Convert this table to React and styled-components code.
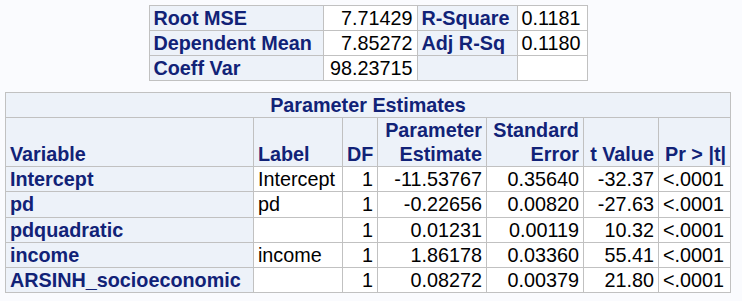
import styled, { createGlobalStyle } from "styled-components";

const GlobalStyle = createGlobalStyle`
  html, body {
    margin: 0;
    padding: 0;
    background: #fafbfe;
  }
`;

const Page = styled.div`
  display: flex;
  flex-direction: column;
  align-items: center;
  gap: 11px;
  padding: 5px 6px 0 0;
  font-family: "Liberation Sans", Arial, sans-serif;
  font-size: 19.8px;
`;

const Table = styled.table`
  border-collapse: collapse;
  table-layout: fixed;
  width: ${(p) => p.$width}px;
  border: 1px solid #c1c1c1;
`;

const Head = styled.th`
  background: #edf2f9;
  color: #112277;
  font-weight: bold;
  border: 1px solid #c1c1c1;
  padding: 0 4px;
  line-height: ${(p) => p.$lh || 24}px;
  text-align: ${(p) => p.$align || "left"};
  vertical-align: bottom;
  white-space: nowrap;
  overflow: hidden;
`;

const Cell = styled.td`
  background: #ffffff;
  color: #000000;
  border: 1px solid #c1c1c1;
  padding: 0 4px;
  line-height: ${(p) => p.$lh || 24}px;
  text-align: ${(p) => p.$align || "right"};
  white-space: nowrap;
  overflow: hidden;
`;

const fitRows = [
  ["Root MSE", "7.71429", "R-Square", "0.1181"],
  ["Dependent Mean", "7.85272", "Adj R-Sq", "0.1180"],
  ["Coeff Var", "98.23715", "", ""],
];

const estimates = [
  ["Intercept", "Intercept", "1", "-11.53767", "0.35640", "-32.37", "<.0001"],
  ["pd", "pd", "1", "-0.22656", "0.00820", "-27.63", "<.0001"],
  ["pdquadratic", "", "1", "0.01231", "0.00119", "10.32", "<.0001"],
  ["income", "income", "1", "1.86178", "0.03360", "55.41", "<.0001"],
  ["ARSINH_socioeconomic", "", "1", "0.08272", "0.00379", "21.80", "<.0001"],
];

const estWidths = [248, 89, 35, 109, 97, 75, 72];

const FitTable = () => (
  <Table $width={438}>
    <colgroup>
      <col style={{ width: 174 }} />
      <col style={{ width: 94 }} />
      <col style={{ width: 100 }} />
      <col style={{ width: 70 }} />
    </colgroup>
    <tbody>
      {fitRows.map((r) => (
        <tr key={r[0]}>
          <Head scope="row">{r[0]}</Head>
          <Cell>{r[1]}</Cell>
          <Head scope="row">{r[2]}</Head>
          <Cell $align="left">{r[3]}</Cell>
        </tr>
      ))}
    </tbody>
  </Table>
);

const EstimatesTable = () => (
  <Table $width={725}>
    <colgroup>
      {estWidths.map((w, i) => (
        <col key={i} style={{ width: w }} />
      ))}
    </colgroup>
    <thead>
      <tr>
        <Head colSpan={7} $align="center">
          Parameter Estimates
        </Head>
      </tr>
      <tr>
        <Head>Variable</Head>
        <Head>Label</Head>
        <Head $align="right">DF</Head>
        <Head $align="right">
          Parameter
          <br />
          Estimate
        </Head>
        <Head $align="right">
          Standard
          <br />
          Error
        </Head>
        <Head $align="right">t Value</Head>
        <Head $align="right">Pr &gt; |t|</Head>
      </tr>
    </thead>
    <tbody>
      {estimates.map((r) => (
        <tr key={r[0]}>
          <Head scope="row" $lh={24.3}>{r[0]}</Head>
          <Cell $align="left" $lh={24.3}>{r[1]}</Cell>
          <Cell $lh={24.3}>{r[2]}</Cell>
          <Cell $lh={24.3}>{r[3]}</Cell>
          <Cell $lh={24.3}>{r[4]}</Cell>
          <Cell $lh={24.3}>{r[5]}</Cell>
          <Cell $align="left" $lh={24.3}>{r[6]}</Cell>
        </tr>
      ))}
    </tbody>
  </Table>
);

export default function App() {
  return (
    <>
      <GlobalStyle />
      <Page>
        <FitTable />
        <EstimatesTable />
      </Page>
    </>
  );
}
